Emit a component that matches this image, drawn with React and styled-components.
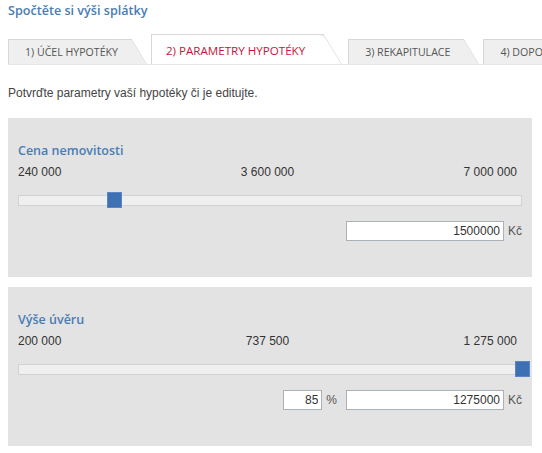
import React from "react";
import styled, { createGlobalStyle } from "styled-components";

const GlobalStyle = createGlobalStyle`
  html, body {
    margin: 0;
    padding: 0;
    background: #fff;
    overflow: hidden;
  }
  body {
    font-family: "Liberation Sans", Arial, sans-serif;
    color: #333;
  }
`;

const tabs = [
  { label: "1) ÚČEL HYPOTÉKY" },
  { label: "2) PARAMETRY HYPOTÉKY", active: true },
  { label: "3) REKAPITULACE" },
  { label: "4) DOPORUČENÍ" },
];

class App extends React.Component {
  render() {
    return (
      <Page>
        <GlobalStyle />
        <Title>Spočtěte si výši splátky</Title>
        <TabBar>
          {tabs.map((t) => (
            <Tab key={t.label} $active={t.active}>
              {t.label}
            </Tab>
          ))}
        </TabBar>
        <Intro>Potvrďte parametry vaší hypotéky či je editujte.</Intro>

        <Panel>
          <PanelLabel>Cena nemovitosti</PanelLabel>
          <Scale>
            <span>240 000</span>
            <Mid>3 600 000</Mid>
            <End>7 000 000</End>
          </Scale>
          <Slider min={240000} max={7000000} value={1500000} />
          <InputRow>
            <Field $wide readOnly value="1500000" />
            <Unit>Kč</Unit>
          </InputRow>
        </Panel>

        <Panel>
          <PanelLabel>Výše úvěru</PanelLabel>
          <Scale>
            <span>200 000</span>
            <Mid>737 500</Mid>
            <End>1 275 000</End>
          </Scale>
          <Slider min={200000} max={1275000} value={1275000} />
          <InputRow>
            <Field readOnly value="85" />
            <Unit $gap>%</Unit>
            <Field $wide readOnly value="1275000" />
            <Unit>Kč</Unit>
          </InputRow>
        </Panel>
      </Page>
    );
  }
}

const Slider = ({ min, max, value }) => {
  const pct = ((value - min) / (max - min)) * 100;
  return (
    <Track>
      <Handle style={{ left: pct + "%" }} />
    </Track>
  );
};

const Page = styled.div`
  padding: 2px 10px 0 8px;
`;

const Title = styled.h2`
  margin: 0;
  font-family: "Open Sans", sans-serif;
  font-weight: 600;
  font-size: 12.6px;
  line-height: 17px;
  color: #4a7cb3;
`;

const TabBar = styled.div`
  display: flex;
  align-items: flex-end;
  height: 30px;
  margin-top: 15px;
  margin-right: -10px;
  border-bottom: 1px solid #e6e6e6;
  overflow: hidden;
  white-space: nowrap;
`;

const Tab = styled.div`
  position: relative;
  z-index: ${(p) => (p.$active ? 2 : 1)};
  flex-shrink: 0;
  display: flex;
  align-items: center;
  box-sizing: border-box;
  height: ${(p) => (p.$active ? 31 : 25)}px;
  margin-bottom: ${(p) => (p.$active ? -1 : 0)}px;
  margin-right: ${(p) => (p.$active ? 24 : 19)}px;
  padding: ${(p) => (p.$active ? "0 19px 0 14px" : "0 14px 0 16px")};
  background: ${(p) => (p.$active ? "#fff" : "#efefef")};
  border: 1px solid #d8d8d8;
  border-right: none;
  border-bottom: none;
  font-family: "Open Sans", sans-serif;
  font-size: ${(p) => (p.$active ? 11.6 : 10.6)}px;
  color: ${(p) => (p.$active ? "#c4163a" : "#555")};

  &::after {
    content: "";
    position: absolute;
    top: -1px;
    bottom: 0;
    right: 0;
    width: 14px;
    background: inherit;
    border-top: 1px solid #d8d8d8;
    border-right: 1px solid #d8d8d8;
    border-top-right-radius: ${(p) => (p.$active ? 5 : 1)}px;
    transform-origin: top right;
    transform: skewX(31deg);
  }
`;

const Intro = styled.p`
  margin: 21px 0 0;
  font-size: 12px;
  line-height: 15px;
  color: #444;
`;

const Panel = styled.section`
  margin-top: 10px;
  padding: 25px 10px 36px;
  background: #e3e3e3;
  &:first-of-type {
    margin-top: 17px;
  }
`;

const PanelLabel = styled.h3`
  margin: 0;
  font-family: "Open Sans", sans-serif;
  font-weight: 600;
  font-size: 12.5px;
  line-height: 16px;
  color: #4a7cb3;
`;

const Scale = styled.div`
  display: grid;
  grid-template-columns: 1fr auto 1fr;
  margin: 6px 5px 0 0;
  font-size: 12px;
  line-height: 15px;
  color: #333;
`;

const Mid = styled.span`
  text-align: center;
`;

const End = styled.span`
  text-align: right;
`;

const Track = styled.div`
  position: relative;
  height: 9px;
  margin: 15px 0 0;
  background: #efefef;
  border: 1px solid #d2d2d2;
`;

const Handle = styled.span`
  position: absolute;
  top: -4px;
  width: 15px;
  height: 16px;
  margin-left: -6px;
  background: #3e70b4;
  border: 1px solid #5b86c2;
  box-sizing: border-box;
`;

const InputRow = styled.div`
  display: flex;
  justify-content: flex-end;
  align-items: center;
  margin: 15px 0 0;
`;

const Field = styled.input`
  box-sizing: border-box;
  width: ${(p) => (p.$wide ? 158 : 39)}px;
  height: 20px;
  padding: 0 3px;
  border: 1px solid #a9b1ba;
  background: #fff;
  font-family: "Liberation Sans", Arial, sans-serif;
  font-size: 12px;
  color: #333;
  text-align: right;
  outline: none;
`;

const Unit = styled.span`
  margin: 0 ${(p) => (p.$gap ? 9 : 0)}px 0 4px;
  font-size: 12px;
  color: #555;
`;

export default App;
